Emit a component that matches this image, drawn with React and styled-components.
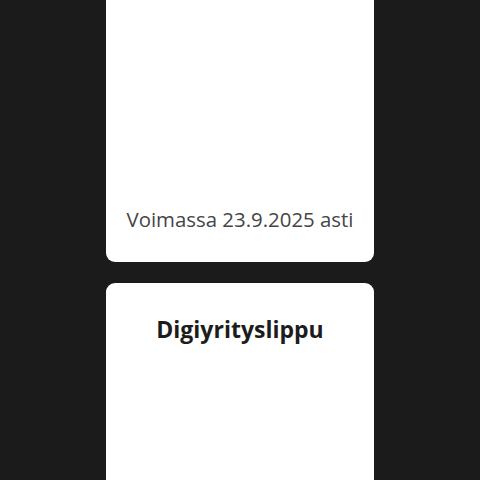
import styled, { createGlobalStyle } from "styled-components";

const GlobalStyle = createGlobalStyle`
  html, body {
    margin: 0;
    padding: 0;
    background: #1b1b1b;
    font-family: "Open Sans", "Noto Sans", sans-serif;
    overflow: hidden;
  }
`;

const Page = styled.div`
  width: 480px;
  height: 480px;
  overflow: hidden;
  background: #1b1b1b;
`;

const TicketList = styled.div`
  display: flex;
  flex-direction: column;
  align-items: center;
  gap: 21px;
  margin-top: -26px;
`;

const Card = styled.div`
  width: 268px;
  background: #ffffff;
  border-radius: 9px;
  display: flex;
  flex-direction: column;
  align-items: center;
  padding: ${(p) => p.$padding};
  box-sizing: border-box;
`;

const Title = styled.h2`
  margin: 0;
  font-size: 23px;
  font-weight: 700;
  color: #1c1c1c;
  line-height: 30px;
`;

const CodeArea = styled.div`
  width: 120px;
  height: ${(p) => p.$height}px;
  margin-top: ${(p) => p.$gap}px;
  background: #ffffff;
`;

const Validity = styled.p`
  margin: 0;
  font-size: 20.4px;
  color: #454545;
  line-height: 26px;
`;

export default function App() {
  return (
    <Page>
      <GlobalStyle />
      <TicketList>
        <Card $padding="0 0 30px">
          <CodeArea $height={232} $gap={0} />
          <Validity>Voimassa 23.9.2025 asti</Validity>
        </Card>
        <Card $padding="31px 0 0">
          <Title>Digiyrityslippu</Title>
          <CodeArea $height={200} $gap={32} />
        </Card>
      </TicketList>
    </Page>
  );
}
